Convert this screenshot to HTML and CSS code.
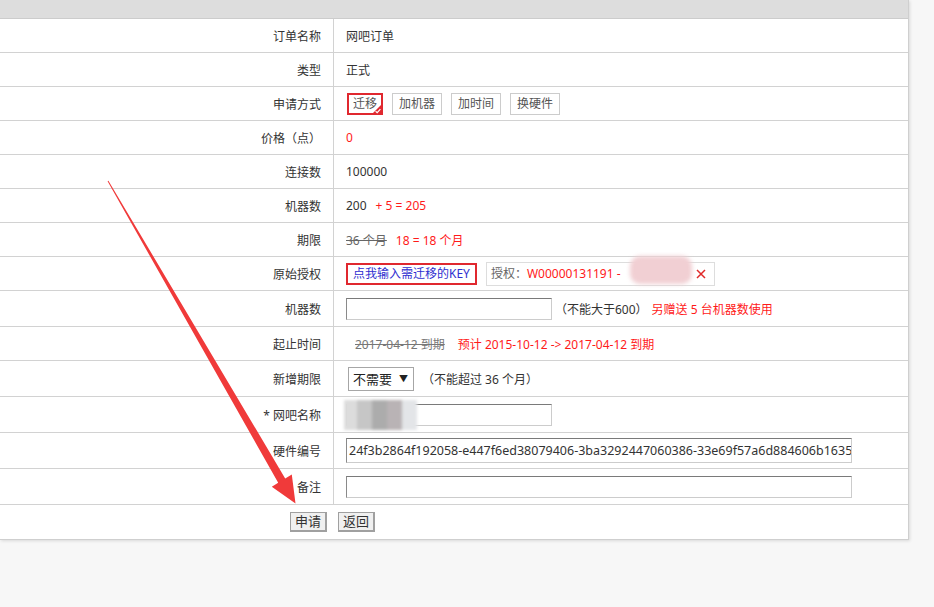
FILE: index.html
```html
<!DOCTYPE html>
<html lang="zh-CN">
<head>
<meta charset="utf-8">
<title>订单</title>
<link rel="stylesheet" href="styles.css">
</head>
<body>
<div class="page">
  <div class="panel">
    <div class="head"></div>
    <div class="row"><div class="lab">订单名称</div><div class="val">网吧订单</div></div>
    <div class="row"><div class="lab">类型</div><div class="val">正式</div></div>
    <div class="row"><div class="lab">申请方式</div><div class="val">
      <div class="modes">
        <span class="mode active">迁移<svg class="tick" width="10" height="10" viewBox="0 0 10 10"><polygon points="10,0 10,10 0,10" fill="#e0282f"/><polyline points="3.6,7.2 5.2,8.6 8.4,5.2" fill="none" stroke="#fff" stroke-width="1.2"/></svg></span>
        <span class="mode">加机器</span>
        <span class="mode">加时间</span>
        <span class="mode">换硬件</span>
      </div>
    </div></div>
    <div class="row"><div class="lab">价格（点）</div><div class="val red">0</div></div>
    <div class="row"><div class="lab">连接数</div><div class="val">100000</div></div>
    <div class="row"><div class="lab">机器数</div><div class="val">200<span class="red sp">+ 5 = 205</span></div></div>
    <div class="row"><div class="lab">期限</div><div class="val"><span class="del">36 个月</span><span class="red sp">18 = 18 个月</span></div></div>
    <div class="row"><div class="lab">原始授权</div><div class="val">
      <span class="keybtn">点我输入需迁移的KEY</span>
      <span class="auth"><span class="gray">授权：</span><span class="red">W00000131191 - </span><span class="blur-pink"></span><svg class="x" width="10" height="10" viewBox="0 0 10 10"><path d="M1 1 L9 9 M9 1 L1 9" stroke="#e02828" stroke-width="1.5"/></svg></span>
    </div></div>
    <div class="row tall"><div class="lab">机器数</div><div class="val"><span class="inp w205"></span><span class="note">（不能大于600）</span><span class="red">另赠送 5 台机器数使用</span></div></div>
    <div class="row"><div class="lab">起止时间</div><div class="val"><span class="del date">2017-04-12 到期</span><span class="red">预计 2015-10-12 -&gt; 2017-04-12 到期</span></div></div>
    <div class="row tall"><div class="lab">新增期限</div><div class="val"><span class="sel">不需要<span class="arr">▼</span></span><span class="note2">（不能超过 36 个月）</span></div></div>
    <div class="row tall"><div class="lab">* 网吧名称</div><div class="val"><span class="inp w205 rel"><span class="mosaic"><i class="m1"></i><i class="m2"></i><i class="m3"></i><i class="m4"></i><i class="m5"></i></span></span></div></div>
    <div class="row tall"><div class="lab">硬件编号</div><div class="val"><span class="inp w505 hw"><span class="hwtext">24f3b2864f192058-e447f6ed38079406-3ba3292447060386-33e69f57a6d884606b16356c</span></span></div></div>
    <div class="row tall"><div class="lab">备注</div><div class="val"><span class="inp w505"></span></div></div>
    <div class="row last"><div class="btns"><span class="btn">申请</span><span class="btn">返回</span></div></div>
  </div>
  <svg class="arrow" width="934" height="607" viewBox="0 0 934 607">
    <polygon points="108.4,180.7 285.2,478.4 291.8,474.4 295.5,503.5 271.8,486.8 278.2,482.7 107.6,181.3" fill="#f03a3a"/>
  </svg>
</div>
</body>
</html>
```
FILE: styles.css
```css
* { box-sizing: border-box; }
html, body { margin: 0; padding: 0; }
body {
  background: #f7f7f7;
  font-family: "Noto Sans", "Noto Sans CJK SC", "Microsoft YaHei", sans-serif;
  font-size: 12px;
  color: #333;
  width: 934px;
  height: 607px;
  overflow: hidden;
}
.page { position: relative; width: 934px; height: 607px; }
.panel {
  width: 909px;
  background: #fff;
  border-right: 1px solid #cfcfcf;
  border-bottom: 1px solid #cfcfcf;
  box-shadow: 1px 1px 3px rgba(0,0,0,0.12);
}
.head {
  height: 19px;
  background: #dddddd;
  border-bottom: 1px solid #cccccc;
}
.row {
  display: flex;
  height: 34px;
  border-bottom: 1px solid #d2d2d2;
}
.row.tall { height: 36px; }
.row.last { height: 34px; border-bottom: none; }
.lab {
  width: 334px;
  flex: none;
  border-right: 1px solid #d2d2d2;
  padding-right: 12px;
  display: flex;
  align-items: center;
  justify-content: flex-end;
  color: #333;
}
.val {
  flex: 1;
  padding-left: 12px;
  display: flex;
  align-items: center;
  white-space: nowrap;
  min-width: 0;
}
.red { color: #ff1a1a; }
.gray { color: #666; }
.sp { margin-left: 9px; }
.del { color: #666; text-decoration: line-through; }
.date { margin-left: 9px; margin-right: 13px; color: #777; }

.modes { display: flex; gap: 9px; margin-left: 1px; }
.mode {
  position: relative;
  height: 22px;
  line-height: 20px;
  padding: 0 6px;
  border: 1px solid #cccccc;
  color: #555;
}
.mode.active {
  border: 2px solid #e0282f;
  padding: 0 4px;
  line-height: 18px;
  color: #555;
}
.tick { position: absolute; right: -1px; bottom: -1px; }

.keybtn {
  height: 22px;
  line-height: 18px;
  padding: 0 5px;
  border: 2px solid #e0282f;
  color: #2f2fd0;
}
.auth {
  position: relative;
  margin-left: 9px;
  width: 229px;
  height: 24px;
  line-height: 22px;
  border: 1px solid #dddddd;
  padding-left: 4px;
  display: flex;
  align-items: center;
}
.blur-pink {
  position: absolute;
  left: 143px;
  top: -7px;
  width: 62px;
  height: 28px;
  background: #f1cfd3;
  border-radius: 10px;
  filter: blur(2px);
}
.x {
  position: absolute;
  right: 8px;
  top: 6px;
}

.inp {
  display: inline-block;
  height: 22px;
  border: 1px solid #cccccc;
  border-top-color: #7a7a7a;
  border-left-color: #8a8a8a;
  background: #fff;
  flex: none;
}
.w205 { width: 206px; }
.w505 { width: 506px; }
.hw { height: 25px; overflow: hidden; padding-left: 2px; line-height: 23px; }
.hwtext { color: #333; font-size: 12.5px; }
.rel { position: relative; }
.note { margin-left: 3px; margin-right: 4px; }
.note2 { margin-left: 8px; }

.sel {
  margin-left: 2px;
  width: 66px;
  height: 24px;
  border: 1px solid #a6a6a6;
  padding-left: 4px;
  display: flex;
  align-items: center;
  position: relative;
  font-size: 13px;
  color: #222;
}
.arr { position: absolute; right: 5px; top: 4px; font-size: 9px; }

.mosaic {
  position: absolute;
  left: -3px;
  top: -5px;
  display: flex;
  filter: blur(1.5px);
}
.mosaic i { display: block; width: 15px; height: 30px; }
.mosaic .m1 { background: #dcdcdc; width: 13px; }
.mosaic .m2 { background: #c6c6c6; }
.mosaic .m3 { background: #acacac; }
.mosaic .m4 { background: #b9b3b5; }
.mosaic .m5 { background: #e3e5e8; }

.btns {
  display: flex;
  gap: 11px;
  padding-left: 290px;
  align-items: center;
}
.btn {
  height: 20px;
  line-height: 17px;
  padding: 0 4px;
  border: 2px solid #a0a0a0;
  border-width: 1px 2px 2px 1px;
  background: #f0f0f0;
  color: #333;
  font-size: 13px;
}
.arrow { position: absolute; left: 0; top: 0; pointer-events: none; }
```
